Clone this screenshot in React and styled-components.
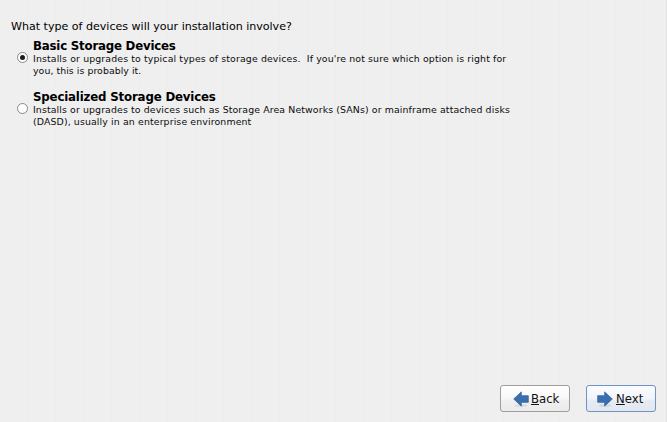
import React from 'react';
import styled, { createGlobalStyle } from 'styled-components';

const Global = createGlobalStyle`
  * { box-sizing: border-box; }
  body { margin: 0; background: #efefef; }
`;

const Page = styled.main`
  display: flex;
  flex-direction: column;
  width: 667px;
  height: 422px;
  padding: 19px 10px 10px 11px;
  overflow: hidden;
  color: #000;
  background: repeating-linear-gradient(90deg, #efefef 0 13px, #eeedee 13px 14px);
  border-right: 1px solid #e2e2e2;
  font-family: 'DejaVu Sans', sans-serif;
`;

const Question = styled.h1`
  margin: 0;
  font-size: 11.1px;
  line-height: 15px;
  font-weight: 400;
  letter-spacing: -0.02px;
  white-space: pre;
`;

const Options = styled.div`
  display: flex;
  flex-direction: column;
  gap: 8px;
  padding-top: 5px;
`;

const Option = styled.label`
  display: flex;
  align-items: flex-start;
  height: 43px;
`;

const Radio = styled.span`
  display: flex;
  align-items: center;
  justify-content: center;
  flex: none;
  width: 11px;
  height: 11px;
  margin: 13px 5px 0 6px;
  border: 1px solid #8d8587;
  border-radius: 50%;
  background: #fff;
`;

const Dot = styled.span`
  width: 5px;
  height: 5px;
  border-radius: 50%;
  background: #1c1c1c;
`;

const OptionTitle = styled.div`
  font-size: 11.8px;
  line-height: 14px;
  font-weight: 700;
  letter-spacing: ${(p) => p.$tracking}px;
  white-space: pre;
`;

const Line = styled.div`
  font-size: 9.4px;
  line-height: 12px;
  color: #0c0c0c;
  letter-spacing: ${(p) => p.$tracking}px;
  white-space: pre;
`;

const Actions = styled.footer`
  display: flex;
  justify-content: flex-end;
  gap: 16px;
  margin-top: auto;
`;

const Button = styled.button`
  display: flex;
  align-items: center;
  gap: ${(p) => (p.$primary ? 3 : 2)}px;
  width: 70px;
  height: 27px;
  padding: 0 0 0 ${(p) => (p.$primary ? 10 : 12)}px;
  border: 1px solid ${(p) => (p.$primary ? '#6d94c4' : '#a39c9c')};
  border-radius: 3px;
  background: ${(p) =>
    p.$primary
      ? 'linear-gradient(#fbfcff, #f1f4fa 50%, #e6ebf3 60%, #e3e7ee)'
      : 'linear-gradient(#fff, #f8f8f8 50%, #efefef 60%, #ebebeb)'};
  color: #111;
  font: 11.7px/16px 'DejaVu Sans', sans-serif;
  white-space: nowrap;

  u {
    text-underline-offset: 1px;
  }
`;

const Arrow = styled.svg`
  flex: none;
  width: 16px;
  height: 16px;
`;

function ArrowIcon({ left }) {
  return (
    <Arrow viewBox="0 0 16 16">
      <ellipse cx="8" cy="14.5" rx="6.5" ry="1.5" fill="#000" opacity=".08" />
      <path
        d={left ? 'M15.3 4.7h-7V.9L.7 8l7.6 7.1v-3.8h7z' : 'M.7 4.7h7V.9L15.3 8l-7.6 7.1v-3.8h-7z'}
        fill="#3b6ead"
        stroke="#3565a2"
        strokeWidth=".8"
      />
    </Arrow>
  );
}

const options = [
  {
    title: 'Basic Storage Devices',
    titleTracking: -0.22,
    selected: true,
    lines: [
      ["Installs or upgrades to typical types of storage devices.  If you're not sure which option is right for", 0.125],
      ['you, this is probably it.', 0.05],
    ],
  },
  {
    title: 'Specialized Storage Devices',
    titleTracking: -0.18,
    selected: false,
    lines: [
      ['Installs or upgrades to devices such as Storage Area Networks (SANs) or mainframe attached disks', 0.11],
      ['(DASD), usually in an enterprise environment', 0.12],
    ],
  },
];

export default function App() {
  return (
    <Page>
      <Global />
      <Question>What type of devices will your installation involve?</Question>
      <Options>
        {options.map((o) => (
          <Option key={o.title}>
            <Radio>{o.selected && <Dot />}</Radio>
            <div>
              <OptionTitle $tracking={o.titleTracking}>{o.title}</OptionTitle>
              {o.lines.map(([text, tracking]) => (
                <Line key={text} $tracking={tracking}>{text}</Line>
              ))}
            </div>
          </Option>
        ))}
      </Options>
      <Actions>
        <Button><ArrowIcon left /><span><u>B</u>ack</span></Button>
        <Button $primary><ArrowIcon /><span><u>N</u>ext</span></Button>
      </Actions>
    </Page>
  );
}
